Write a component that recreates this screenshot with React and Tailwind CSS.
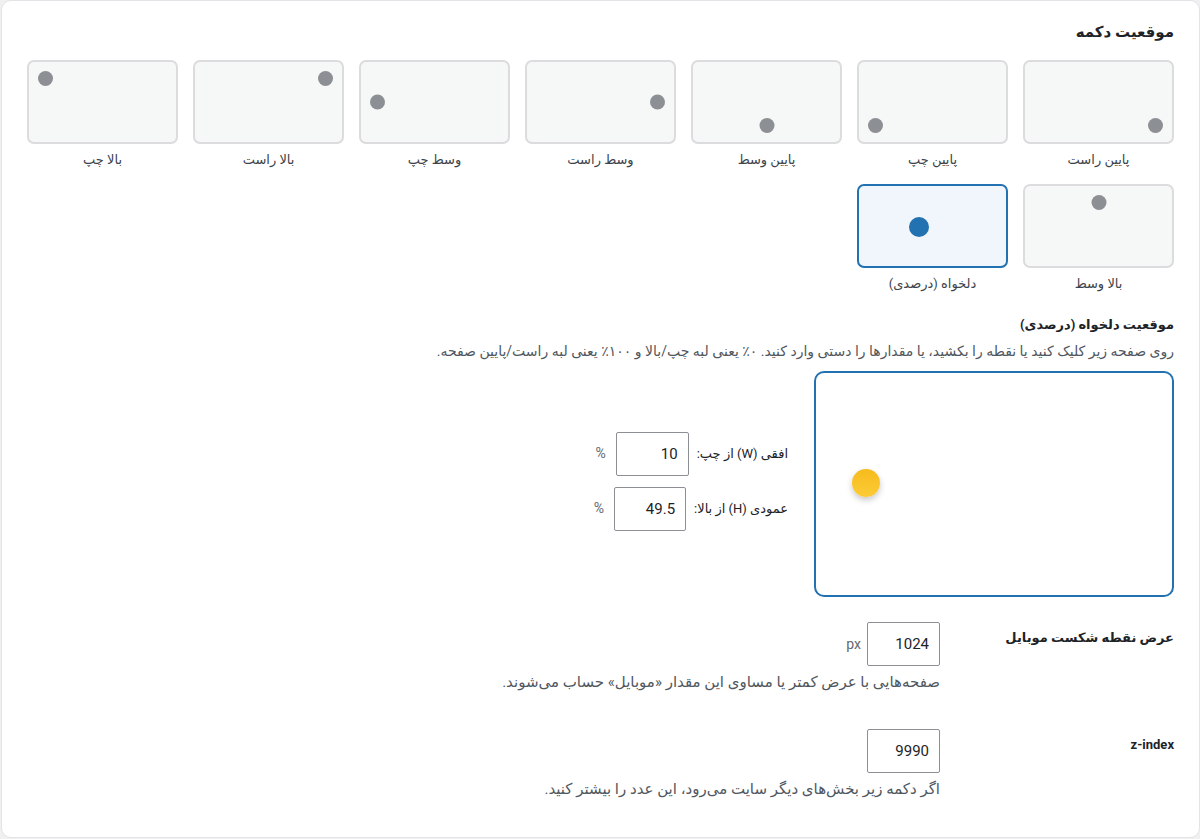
const POSITIONS = [
  { key: "bottom-right", label: "پایین راست", dot: "bottom-[9px] right-[9px]" },
  { key: "bottom-left", label: "پایین چپ", dot: "bottom-[9px] left-[9px]" },
  { key: "bottom-center", label: "پایین وسط", dot: "bottom-[9px] left-1/2 -translate-x-1/2" },
  { key: "middle-right", label: "وسط راست", dot: "top-1/2 right-[9px] -translate-y-1/2" },
  { key: "middle-left", label: "وسط چپ", dot: "top-1/2 left-[9px] -translate-y-1/2" },
  { key: "top-right", label: "بالا راست", dot: "top-[9px] right-[9px]" },
  { key: "top-left", label: "بالا چپ", dot: "top-[9px] left-[9px]" },
  { key: "top-center", label: "بالا وسط", dot: "top-[9px] left-1/2 -translate-x-1/2" },
  { key: "custom", label: "دلخواه (درصدی)", dot: "top-[31px] left-[50px]" },
];

const FONT = { fontFamily: 'Roboto, "DejaVu Sans", sans-serif' };

export default function App() {
  const selected = "custom";
  const x = 10;
  const y = 49.5;

  return (
    <div dir="rtl" className="min-h-screen bg-[#f0f0f1]" style={FONT}>
      <div className="h-[838px] w-[1199px] rounded-[10px] border border-[#e2e4e7] bg-white px-[25px] pt-[19px]">
        <h2 className="text-[15px] font-bold leading-[24px] text-[#1d2327]">موقعیت دکمه</h2>

        <div className="mt-[16px] grid grid-cols-7 gap-x-[15px] gap-y-[14px]">
          {POSITIONS.map((p) => (
            <PositionTile key={p.key} item={p} active={p.key === selected} />
          ))}
        </div>

        <h3 className="mt-[20px] text-[13px] font-bold leading-[22px] text-[#1d2327]">
          موقعیت دلخواه (درصدی)
        </h3>
        <p className="mt-[5px] text-[14px] leading-[20px] text-[#50575e]">
          روی صفحه زیر کلیک کنید یا نقطه را بکشید، یا مقدارها را دستی وارد کنید. ۰٪ یعنی لبه چپ/بالا و ۱۰۰٪ یعنی لبه راست/پایین صفحه.
        </p>

        <div className="mt-[10px] flex items-center gap-[26px]">
          <div className="relative h-[226px] w-[360px] shrink-0 rounded-[10px] border-2 border-[#2271b1] bg-white">
            <span
              className="absolute h-[28px] w-[28px] -translate-y-1/2 rounded-full bg-gradient-to-b from-[#f6bb1c] to-[#fccb35] shadow-[0_3px_6px_rgba(0,0,0,0.22)]"
              style={{ left: `${x}%`, top: `${y}%` }}
            />
          </div>

          <div className="flex flex-col gap-[11px] pb-[6px] text-[13px] text-[#1d2327]">
            <CoordRow label="افقی (W) از چپ:" value="10" width="w-[73px]" />
            <CoordRow label="عمودی (H) از بالا:" value="49.5" width="w-[72px]" />
          </div>
        </div>

        <SettingRow
          className="mt-[25px]"
          label="عرض نقطه شکست موبایل"
          value="1024"
          unit="px"
          help="صفحه‌هایی با عرض کمتر یا مساوی این مقدار «موبایل» حساب می‌شوند."
        />
        <SettingRow
          className="mt-[37px]"
          label="z-index"
          value="9990"
          help="اگر دکمه زیر بخش‌های دیگر سایت می‌رود، این عدد را بیشتر کنید."
        />
      </div>
    </div>
  );
}

function PositionTile({ item, active }) {
  return (
    <button type="button" className="flex flex-col items-center">
      <span
        className={
          active
            ? "relative block h-[84px] w-full rounded-[7px] border-2 border-[#2271b1] bg-[#f0f6fc]"
            : "relative block h-[84px] w-full rounded-[7px] border-2 border-[#dcdcde] bg-[#f6f7f7]"
        }
      >
        {active ? (
          <span className={"absolute h-[20px] w-[20px] rounded-full bg-[#2271b1] " + item.dot} />
        ) : (
          <span className={"absolute h-[15px] w-[15px] rounded-full bg-[#8c8f94] " + item.dot} />
        )}
      </span>
      <span className="mt-[6px] text-[13px] leading-[20px] text-[#3c434a]">{item.label}</span>
    </button>
  );
}

function CoordRow({ label, value, width }) {
  return (
    <div className="flex items-center">
      <label className="ml-[8px]">{label}</label>
      <input
        readOnly
        value={value}
        className={"h-[44px] rounded-[2px] border border-[#8c8f94] bg-white px-[10px] text-right text-[15px] text-[#1d2327] outline-none " + width}
      />
      <span className="mr-[10px] text-[14px] text-[#646970]">%</span>
    </div>
  );
}

function SettingRow({ className, label, value, unit, help }) {
  return (
    <div className={"flex items-start " + className}>
      <div className="w-[234px] shrink-0 pt-[5px] text-[13px] font-bold leading-[22px] text-[#1d2327]">{label}</div>
      <div>
        <div className="flex items-center">
          <input
            readOnly
            value={value}
            className="h-[44px] w-[73px] rounded-[2px] border border-[#8c8f94] bg-white px-[10px] text-right text-[15px] text-[#1d2327] outline-none"
          />
          {unit && <span className="mr-[6px] text-[14px] text-[#646970]">{unit}</span>}
        </div>
        <p className="mt-[6px] text-[15px] leading-[20px] text-[#50575e]">{help}</p>
      </div>
    </div>
  );
}
